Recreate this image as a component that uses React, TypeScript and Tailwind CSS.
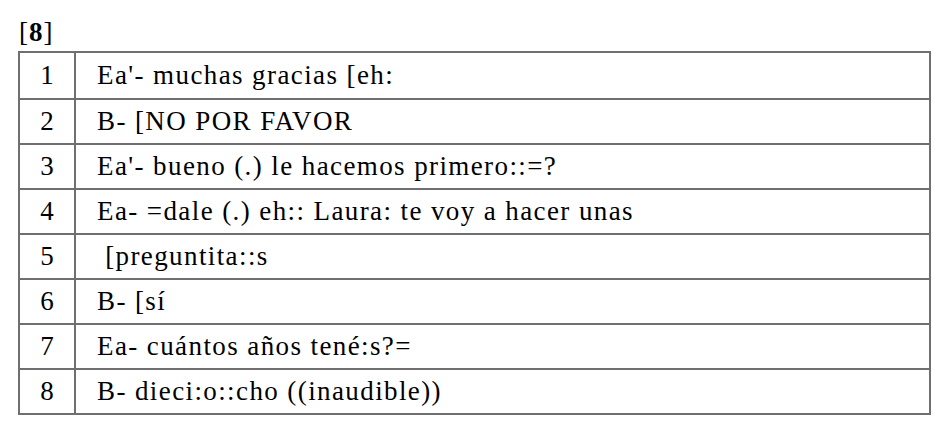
const rows: string[] = [
  "Ea'- muchas gracias [eh:",
  "B- [NO POR FAVOR",
  "Ea'- bueno (.) le hacemos primero::=?",
  "Ea- =dale (.) eh:: Laura: te voy a hacer unas",
  " [preguntita::s",
  "B- [sí",
  "Ea- cuántos años tené:s?=",
  "B- dieci:o::cho ((inaudible))",
];

export default function App() {
  return (
    <div className="w-[950px] h-[436px] bg-white text-black [font-family:'Liberation_Serif',serif] text-[27px] leading-none">
      <div className="pl-[19px] pt-[19px] h-[51px] tracking-[1px]">
        [<span className="font-bold">8</span>]
      </div>
      <div className="ml-[18px] w-[913px] border-2 border-[#6f6f6f]">
        {rows.map((text, i) => (
          <div
            key={i}
            className={"flex h-[45px] items-center " + (i > 0 ? "border-t-2 border-[#6f6f6f]" : "")}
          >
            <div className="w-[56px] shrink-0 self-stretch flex items-center justify-center border-r-2 border-[#6f6f6f]">
              {i + 1}
            </div>
            <div className="pl-[21px] whitespace-pre tracking-[1.4px]">{text}</div>
          </div>
        ))}
      </div>
    </div>
  );
}
